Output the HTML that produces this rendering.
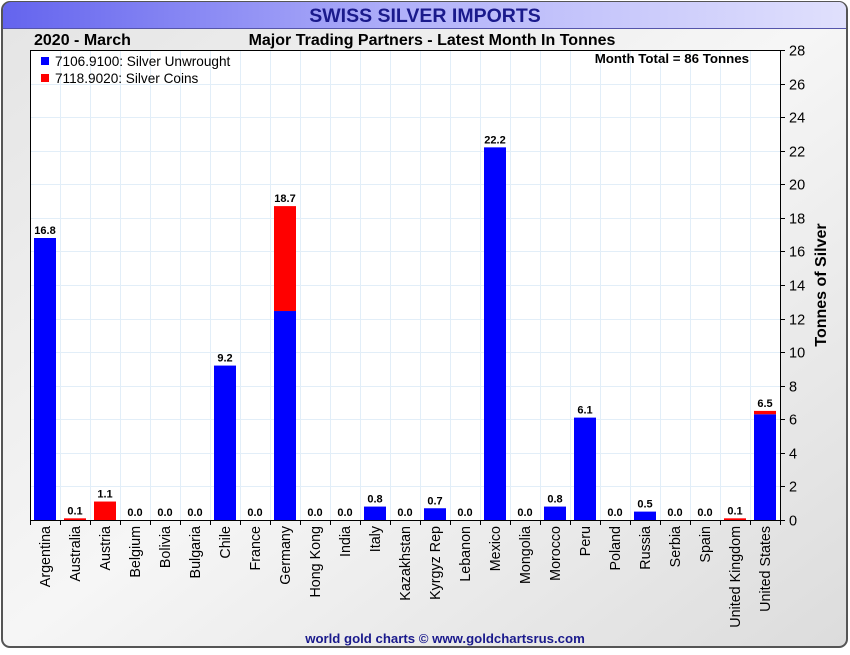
<!DOCTYPE html>
<html><head><style>
body{margin:0;width:850px;height:650px;overflow:hidden;background:#fff;font-family:"Liberation Sans",sans-serif}
</style></head><body>
<svg width="850" height="650" xmlns="http://www.w3.org/2000/svg" font-family="Liberation Sans, sans-serif">
<defs>
<linearGradient id="bg" x1="0" y1="0" x2="1" y2="1"><stop offset="0" stop-color="#e4e4e4"/><stop offset="0.5" stop-color="#f6f6f6"/><stop offset="1" stop-color="#dcdcdc"/></linearGradient>
<linearGradient id="tb" x1="0" y1="0" x2="1" y2="0"><stop offset="0" stop-color="#6464ee"/><stop offset="0.5" stop-color="#b4b4fa"/><stop offset="1" stop-color="#e0e0fc"/></linearGradient>
</defs>
<rect x="0" y="0" width="850" height="650" fill="#fff"/>
<rect x="2" y="2" width="845" height="645" rx="8" fill="url(#bg)" stroke="#555" stroke-width="2"/>
<path d="M3 28 V10 a8 8 0 0 1 8 -8 H840 a8 8 0 0 1 6 6 V28 Z" fill="url(#tb)"/>
<line x1="3" y1="28.5" x2="846" y2="28.5" stroke="#5555aa"/>
<text x="425" y="22" text-anchor="middle" font-size="19.5" font-weight="bold" fill="#1a1a8c">SWISS SILVER IMPORTS</text>
<text x="34" y="45" font-size="16" font-weight="bold">2020 - March</text>
<text x="432" y="45" text-anchor="middle" font-size="16" font-weight="bold">Major Trading Partners - Latest Month In Tonnes</text>
<rect x="30.5" y="50.5" width="750" height="470" fill="#fff" stroke="#000"/>
<g stroke="#e2eef8" stroke-width="1" id="grid"></g>
<g id="bars"></g>
<rect x="41" y="57" width="8" height="8" fill="#00f"/>
<text x="55" y="66" font-size="13.6">7106.9100: Silver Unwrought</text>
<rect x="41" y="74" width="8" height="8" fill="#f00"/>
<text x="55" y="83" font-size="13.6">7118.9020: Silver Coins</text>
<text x="749" y="63" text-anchor="end" font-size="13.3" font-weight="bold">Month Total = 86 Tonnes</text>
<text transform="translate(826,285) rotate(-90)" text-anchor="middle" font-size="16" font-weight="bold">Tonnes of Silver</text>
<text x="445" y="643" text-anchor="middle" font-size="13.2" font-weight="bold" fill="#1a1a8c">world gold charts © www.goldchartsrus.com</text>
</svg>
<script>
var ns="http://www.w3.org/2000/svg",svg=document.querySelector('svg');
function el(t,a,txt,parent){var e=document.createElementNS(ns,t);for(var k in a)e.setAttribute(k,a[k]);if(txt!=null)e.textContent=txt;(parent||svg).appendChild(e);return e;}
var grid=document.getElementById('grid'),bars=document.getElementById('bars');
var s=470/28;
for(var i=1;i<25;i++)el('line',{x1:30+30*i+.5,y1:51,x2:30+30*i+.5,y2:520},null,grid);
for(var v=2;v<28;v+=2){var y=Math.round(520-v*s)+.5;el('line',{x1:31,y1:y,x2:780,y2:y},null,grid);}
for(var v=0;v<=28;v+=2){var y=Math.round(520-v*s)+.5;el('line',{x1:780,y1:y,x2:785,y2:y,stroke:'#000'});el('text',{x:789,y:y+5,'font-size':'14.5'},v);}
var d=[["Argentina",16.8,0],["Australia",0,.1],["Austria",0,1.1],["Belgium",0,0],["Bolivia",0,0],["Bulgaria",0,0],["Chile",9.2,0],["France",0,0],["Germany",12.45,6.25],["Hong Kong",0,0],["India",0,0],["Italy",.8,0],["Kazakhstan",0,0],["Kyrgyz Rep",.7,0],["Lebanon",0,0],["Mexico",22.2,0],["Mongolia",0,0],["Morocco",.8,0],["Peru",6.1,0],["Poland",0,0],["Russia",.5,0],["Serbia",0,0],["Spain",0,0],["United Kingdom",0,.1],["United States",6.3,.2]];
d.forEach(function(r,i){var cx=45+30*i,b=r[1]*s,t=(r[1]+r[2])*s;
if(b>0)el('rect',{x:cx-11,y:520-b,width:22,height:b,fill:'#00f'},null,bars);
if(r[2]>0)el('rect',{x:cx-11,y:520-t,width:22,height:t-b,fill:'#f00'},null,bars);
el('text',{x:cx,y:516-t,'text-anchor':'middle','font-size':'11','font-weight':'bold'},(r[1]+r[2]).toFixed(1),bars);
el('line',{x1:30+30*i+.5,y1:520,x2:30+30*i+.5,y2:525,stroke:'#000'});
el('text',{transform:'translate('+(cx+5)+',526) rotate(-90)','text-anchor':'end','font-size':'14.3'},r[0]);
});
el('line',{x1:780.5,y1:520,x2:780.5,y2:525,stroke:'#000'});
</script>
</body></html>
